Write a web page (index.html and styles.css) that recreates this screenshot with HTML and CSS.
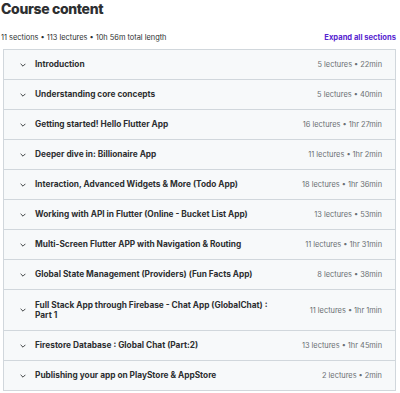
FILE: index.html
```html
<!DOCTYPE html>
<html>
<head>
<meta charset="utf-8">
<link rel="stylesheet" href="styles.css">
</head>
<body>
<div class="page">
  <h2 class="title">Course content</h2>
  <div class="meta">
    <span class="stats">11 sections • 113 lectures • 10h 56m total length</span>
    <span class="expand">Expand all sections</span>
  </div>
  <div class="sections">
    <div class="row"><span class="chev"><svg viewBox="0 0 10 6" width="6" height="4"><path d="M1 1l4 4 4-4" fill="none" stroke="#2d2f31" stroke-width="1.5"/></svg></span><span class="name">Introduction</span><span class="info">5 lectures • 22min</span></div>
    <div class="row"><span class="chev"><svg viewBox="0 0 10 6" width="6" height="4"><path d="M1 1l4 4 4-4" fill="none" stroke="#2d2f31" stroke-width="1.5"/></svg></span><span class="name">Understanding core concepts</span><span class="info">5 lectures • 40min</span></div>
    <div class="row"><span class="chev"><svg viewBox="0 0 10 6" width="6" height="4"><path d="M1 1l4 4 4-4" fill="none" stroke="#2d2f31" stroke-width="1.5"/></svg></span><span class="name">Getting started! Hello Flutter App</span><span class="info">16 lectures • 1hr 27min</span></div>
    <div class="row"><span class="chev"><svg viewBox="0 0 10 6" width="6" height="4"><path d="M1 1l4 4 4-4" fill="none" stroke="#2d2f31" stroke-width="1.5"/></svg></span><span class="name">Deeper dive in: Billionaire App</span><span class="info">11 lectures • 1hr 2min</span></div>
    <div class="row"><span class="chev"><svg viewBox="0 0 10 6" width="6" height="4"><path d="M1 1l4 4 4-4" fill="none" stroke="#2d2f31" stroke-width="1.5"/></svg></span><span class="name">Interaction, Advanced Widgets &amp; More (Todo App)</span><span class="info">18 lectures • 1hr 36min</span></div>
    <div class="row"><span class="chev"><svg viewBox="0 0 10 6" width="6" height="4"><path d="M1 1l4 4 4-4" fill="none" stroke="#2d2f31" stroke-width="1.5"/></svg></span><span class="name">Working with API in Flutter (Online - Bucket List App)</span><span class="info">13 lectures • 53min</span></div>
    <div class="row"><span class="chev"><svg viewBox="0 0 10 6" width="6" height="4"><path d="M1 1l4 4 4-4" fill="none" stroke="#2d2f31" stroke-width="1.5"/></svg></span><span class="name">Multi-Screen Flutter APP with Navigation &amp; Routing</span><span class="info">11 lectures • 1hr 31min</span></div>
    <div class="row"><span class="chev"><svg viewBox="0 0 10 6" width="6" height="4"><path d="M1 1l4 4 4-4" fill="none" stroke="#2d2f31" stroke-width="1.5"/></svg></span><span class="name">Global State Management (Providers) (Fun Facts App)</span><span class="info">8 lectures • 38min</span></div>
    <div class="row tall"><span class="chev"><svg viewBox="0 0 10 6" width="6" height="4"><path d="M1 1l4 4 4-4" fill="none" stroke="#2d2f31" stroke-width="1.5"/></svg></span><span class="name narrow">Full Stack App through Firebase - Chat App (GlobalChat) : Part 1</span><span class="info">11 lectures • 1hr 1min</span></div>
    <div class="row"><span class="chev"><svg viewBox="0 0 10 6" width="6" height="4"><path d="M1 1l4 4 4-4" fill="none" stroke="#2d2f31" stroke-width="1.5"/></svg></span><span class="name">Firestore Database : Global Chat (Part:2)</span><span class="info">13 lectures • 1hr 45min</span></div>
    <div class="row"><span class="chev"><svg viewBox="0 0 10 6" width="6" height="4"><path d="M1 1l4 4 4-4" fill="none" stroke="#2d2f31" stroke-width="1.5"/></svg></span><span class="name">Publishing your app on PlayStore &amp; AppStore</span><span class="info">2 lectures • 2min</span></div>
  </div>
</div>
</body>
</html>
```

FILE: styles.css
```css
* { box-sizing: border-box; }
html, body { margin: 0; padding: 0; background: #fff; }
body { font-family: Inter, "Noto Sans", sans-serif; color: #2d2f31; }
.page { width: 400px; padding: 0 4px 0 1px; }
.title {
  margin: 0;
  font-size: 14px;
  font-weight: 800;
  line-height: 18px;
  letter-spacing: -0.35px;
}
.meta {
  display: flex;
  justify-content: space-between;
  align-items: center;
  margin-top: 13px;
  height: 12px;
  font-size: 7.4px;
}
.stats { color: #2d2f31; }
.expand { color: #5624d0; font-weight: 700; font-size: 7.6px; }
.sections {
  margin: 6px 0 0 2px;
  border: 1px solid #d1d7dc;
  border-bottom: none;
}
.row {
  display: flex;
  align-items: center;
  height: 30px;
  padding: 0 13px 0 16px;
  background: #f7f9fa;
  border-bottom: 1px solid #d1d7dc;
}
.row.tall { height: 41px; }
.chev { width: 15px; display: flex; align-items: center; }
.name {
  flex: 1;
  font-size: 8.3px;
  font-weight: 700;
  line-height: 10.5px;
}
.name.narrow { flex: 0 1 246px; }
.info { margin-left: auto; font-size: 7.4px; color: #6a6f73; white-space: nowrap; }
```
